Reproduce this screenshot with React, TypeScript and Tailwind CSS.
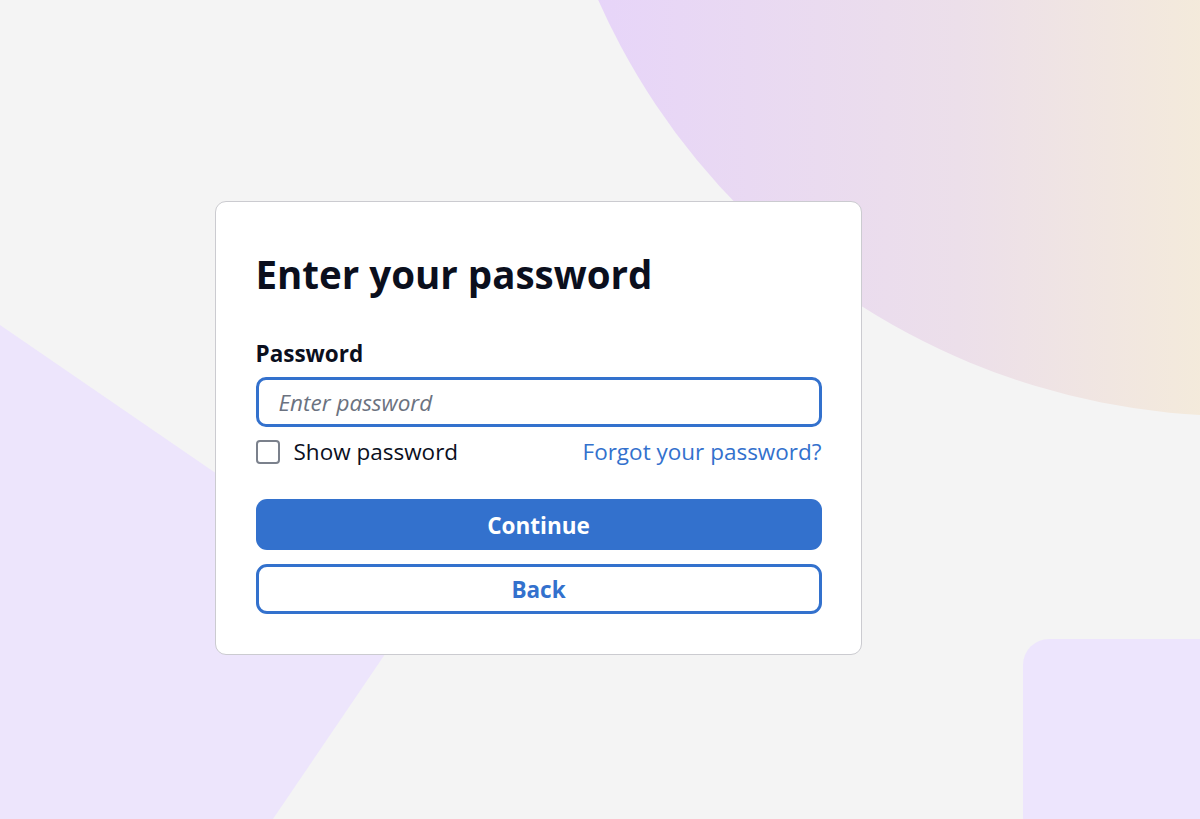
import React from "react";

export default function App() {
  return (
    <div
      className="relative w-full h-[819px] overflow-hidden bg-[#f4f4f4]"
      style={{ fontFamily: '"Open Sans", "Noto Sans", sans-serif' }}
    >
      {/* decorative background */}
      <div className="absolute left-[538px] top-[-984px] w-[1400px] h-[1400px] rounded-full bg-[linear-gradient(90deg,#e6d3fb_0%,#ecdfea_30%,#f5ecd9_50%,#f6eed8_100%)]" />
      <svg className="absolute left-0 top-0" width="1200" height="819" viewBox="0 0 1200 819">
        <polygon points="0,325 415,610 273,819 0,819" fill="#ede5fc" />
      </svg>
      <div className="absolute left-[1023px] top-[639px] w-[300px] h-[300px] rounded-[26px] bg-[#ede5fd]" />

      {/* content */}
      <div className="relative pl-[215px] pt-[201px]">
        <div className="w-[647px] rounded-[11px] border-[1.5px] border-[#cbcbd0] bg-white px-[39.5px] pt-[46.5px] pb-[40.5px]">
          <h1 className="text-[38.5px] leading-[50px] font-bold text-[#0b0f1d]">
            Enter your password
          </h1>
          <label className="mt-[40px] block text-[22.5px] leading-[30px] font-bold text-[#0b0f1d]">
            Password
          </label>
          <div className="mt-[8px] h-[50px] rounded-[10px] border-[3px] border-[#3371cd] flex items-center px-[20px] pt-[3px]">
            <span className="text-[22.5px] italic text-[#6b7280]">Enter password</span>
          </div>
          <div className="mt-[10px] flex items-center justify-between">
            <div className="flex items-center gap-[14px]">
              <div className="w-[24px] h-[24px] rounded-[4px] border-[2.5px] border-[#7b818c] bg-white" />
              <span className="text-[22.5px] leading-[30px] text-[#0b0f1d]">Show password</span>
            </div>
            <span className="text-[22.5px] leading-[30px] text-[#3371cd]">Forgot your password?</span>
          </div>
          <button className="mt-[32px] w-full h-[51px] rounded-[11px] bg-[#3371cd] text-white text-[22.5px] font-bold pt-[3px]">
            Continue
          </button>
          <button className="mt-[14px] w-full h-[50px] rounded-[11px] border-[3px] border-[#3371cd] bg-white text-[#3371cd] text-[22.5px] font-bold pt-[3px]">
            Back
          </button>
        </div>
      </div>
    </div>
  );
}
